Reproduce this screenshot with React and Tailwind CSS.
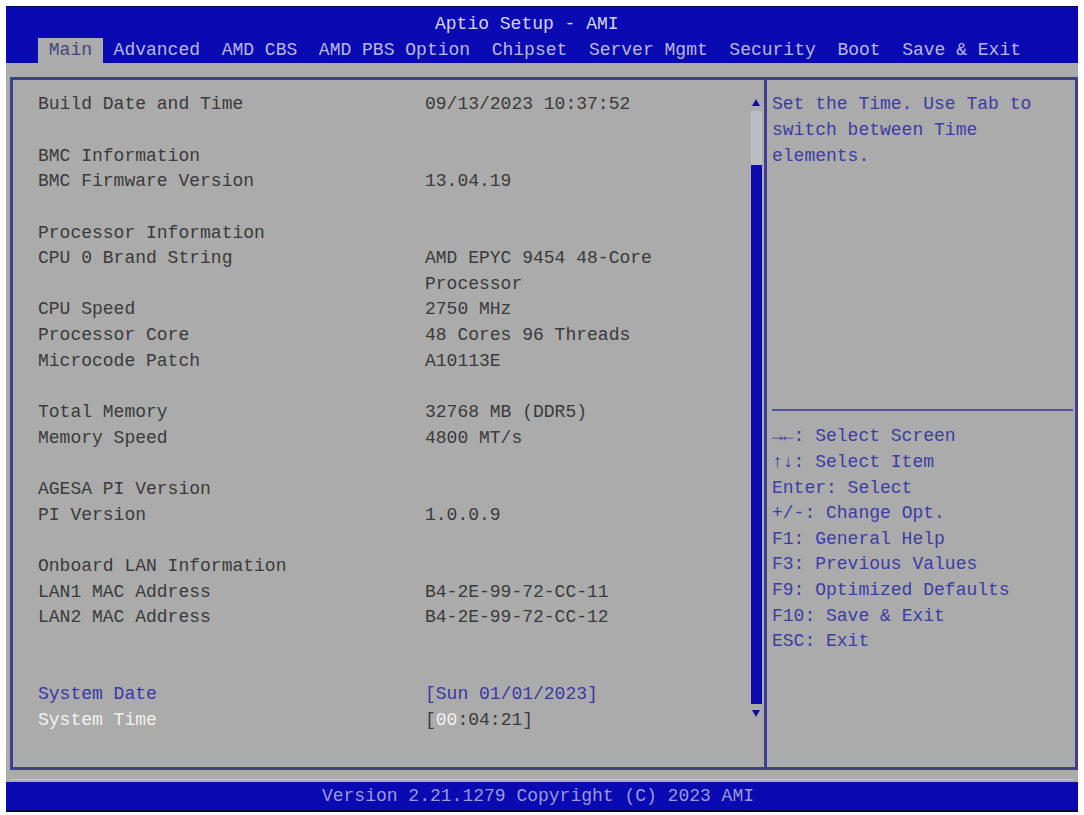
import React from 'react';

const tabs = ['Main', 'Advanced', 'AMD CBS', 'AMD PBS Option', 'Chipset', 'Server Mgmt', 'Security', 'Boot', 'Save & Exit'];

const rows = [
  ['Build Date and Time', '09/13/2023 10:37:52'],
  [],
  ['BMC Information'],
  ['BMC Firmware Version', '13.04.19'],
  [],
  ['Processor Information'],
  ['CPU 0 Brand String', 'AMD EPYC 9454 48-Core'],
  ['', 'Processor'],
  ['CPU Speed', '2750 MHz'],
  ['Processor Core', '48 Cores 96 Threads'],
  ['Microcode Patch', 'A10113E'],
  [],
  ['Total Memory', '32768 MB (DDR5)'],
  ['Memory Speed', '4800 MT/s'],
  [],
  ['AGESA PI Version'],
  ['PI Version', '1.0.0.9'],
  [],
  ['Onboard LAN Information'],
  ['LAN1 MAC Address', 'B4-2E-99-72-CC-11'],
  ['LAN2 MAC Address', 'B4-2E-99-72-CC-12'],
  [],
  [],
];

const keys = [
  ['→←:', ' Select Screen'],
  ['↑↓:', ' Select Item'],
  ['Enter:', ' Select'],
  ['+/-:', ' Change Opt.'],
  ['F1:', ' General Help'],
  ['F3:', ' Previous Values'],
  ['F9:', ' Optimized Defaults'],
  ['F10:', ' Save & Exit'],
  ['ESC:', ' Exit'],
];

const Row = ({ label, value, className = 'text-[#3a3a3a]' }) => (
  <div className={`flex h-[25.65px] items-center whitespace-pre ${className}`}>
    <div className="w-[387px] shrink-0">{label}</div>
    <div>{value}</div>
  </div>
);

const Scrollbar = () => (
  <div className="mr-[2px] flex w-[12px] shrink-0 flex-col items-center pt-[18px]">
    <svg width="10" height="9" viewBox="0 0 10 9">
      <path d="M5 1 L9 8 L1 8 Z" fill="#10109a" />
    </svg>
    <div className="mt-[4px] h-[54px] w-[11px] bg-[#bdbdc6]" />
    <div className="h-[539px] w-[11px] bg-[#0c0cae]" />
    <svg className="mt-[5px]" width="10" height="9" viewBox="0 0 10 9">
      <path d="M1 1 L9 1 L5 8 Z" fill="#10109a" />
    </svg>
  </div>
);

export default function App() {
  return (
    <div
      className="h-[815px] w-[1084px] bg-white px-[6px] pt-[6px] text-[18px]"
      style={{ fontFamily: '"Liberation Mono", "DejaVu Sans Mono", monospace' }}
    >
      <div className="w-[1072px]">
        {/* Header */}
        <div className="border-t border-[#04045a] bg-[#0a0ab2]">
          <div className="flex h-[31px] items-center whitespace-pre pl-[429px] pt-[3px] text-[#d4d4f2]">
            Aptio Setup - AMI
          </div>
          <div className="flex h-[25px] items-center whitespace-pre pl-[32px]">
            {tabs.map((t, i) => (
              <span
                key={t}
                className={
                  i === 0
                    ? 'flex h-[25px] items-center bg-[#ababab] text-[#45457c]'
                    : 'flex h-[25px] items-center text-[#b8b8e8]'
                }
              >
                {` ${t} `}
              </span>
            ))}
          </div>
        </div>

        {/* Body */}
        <div className="h-[719px] bg-[#ababab] pl-[4px] pt-[14px]">
          <div className="flex h-[693px] border-[3px] border-[#3e3e92]">
            {/* Left panel */}
            <div className="flex flex-1">
              <div className="flex-1 pl-[25px] pt-[12px]">
                {rows.map((r, i) => (
                  <Row key={i} label={r[0] || ''} value={r[1] || ''} />
                ))}
                <Row label="System Date" value="[Sun 01/01/2023]" className="text-[#3838a6]" />
                <div className="flex h-[25.65px] items-center whitespace-pre text-[#3a3a3a]">
                  <div className="w-[387px] shrink-0 text-[#f2f2f2]">System Time</div>
                  <div>
                    [<span className="text-[#f2f2f2]">00</span>:04:21]
                  </div>
                </div>
              </div>
              <Scrollbar />
            </div>

            {/* Divider */}
            <div className="w-[3px] bg-[#3e3e92]" />

            {/* Right panel */}
            <div className="flex w-[308px] shrink-0 flex-col pt-[12px] text-[#3c3ca4]">
              <div className="pl-[5px]">
                <div className="flex h-[25.65px] items-center whitespace-pre">Set the Time. Use Tab to</div>
                <div className="flex h-[25.65px] items-center whitespace-pre">switch between Time</div>
                <div className="flex h-[25.65px] items-center whitespace-pre">elements.</div>
              </div>
              <div className="ml-[5px] mr-[2px] mt-[240px] h-[2px] bg-[#5252a0]" />
              <div className="mt-[13px] pl-[5px]">
                {keys.map(([k, v]) => (
                  <div key={k} className="flex h-[25.65px] items-center whitespace-pre">
                    <span>{k}</span>
                    <span>{v}</span>
                  </div>
                ))}
              </div>
            </div>
          </div>
          <div className="mr-[4px] mt-[9px] h-[1px] bg-[#c6c6dc]" />
        </div>

        {/* Footer */}
        <div className="flex h-[30px] items-center justify-center whitespace-pre border-b-2 border-[#03033c] bg-[#0a0ab2] pr-[8px] text-[#9a9adc]">
          Version 2.21.1279 Copyright (C) 2023 AMI
        </div>
      </div>
    </div>
  );
}
